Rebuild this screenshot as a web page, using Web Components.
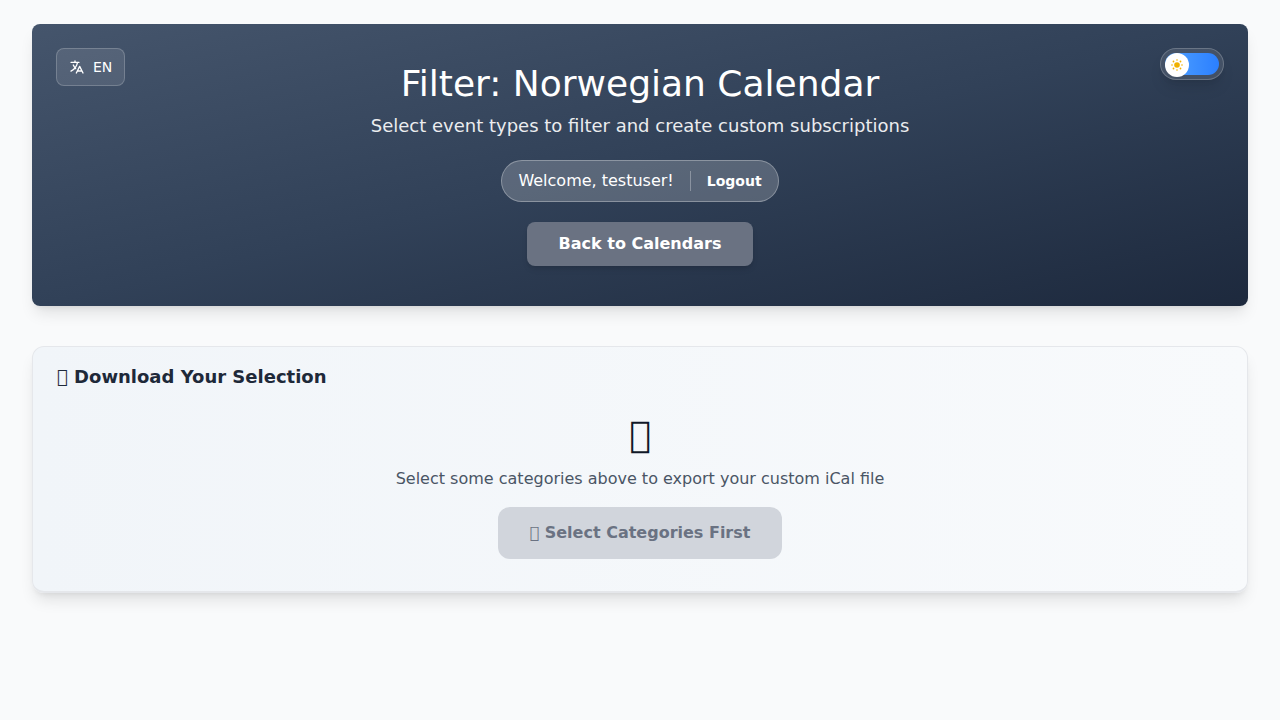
<!DOCTYPE html>
<html lang="en">
<head>
<meta charset="utf-8">
<meta name="viewport" content="width=device-width, initial-scale=1">
<title>Filter: Norwegian Calendar</title>
<style>
  body { margin: 0; background: #f9fafb; color: #101828; font: 16px/24px "DejaVu Sans", sans-serif; }
</style>
</head>
<body>
<calendar-app></calendar-app>
<script>
const define = (name, html) => {
  const template = document.createElement('template');
  template.innerHTML = '<style>*,*::before,*::after{box-sizing:border-box}:host{display:block;box-sizing:border-box}button{font:inherit;color:inherit;border:0;margin:0;padding:0;background:none;cursor:pointer}h1,h2,p{margin:0}</style>' + html;
  customElements.define(name, class extends HTMLElement {
    constructor() {
      super();
      this.attachShadow({ mode: 'open' }).append(template.content.cloneNode(true));
    }
  });
};

define('language-button', `
  <style>
    button { display: flex; align-items: center; gap: 8px; height: 38px; padding: 0 12px; border: 1px solid #ffffff33; border-radius: 8px; background: #ffffff1a; color: #fff; font-size: 14px; line-height: 20px; }
    svg { width: 16px; height: 16px; fill: none; stroke: currentColor; stroke-width: 2; stroke-linecap: round; stroke-linejoin: round; }
  </style>
  <button type="button" aria-label="Language">
    <svg viewBox="0 0 24 24" aria-hidden="true"><path d="M3 5h12M9 3v2m1.048 9.500A18.022 18.022 0 0 1 6.412 9m6.088 9h7M11 21l5-10 5 10M12.751 5C11.783 10.770 8.070 15.610 3 18.129"/></svg>
    <slot></slot>
  </button>`);

define('theme-toggle', `
  <style>
    button { display: block; width: 64px; height: 32px; padding: 4px; border: 1px solid #ffffff33; border-radius: 16px; background: #ffffff1a; box-shadow: 0 10px 15px -3px #0000001a, 0 4px 6px -4px #0000001a; }
    .track { display: block; height: 22px; border-radius: 11px; background: linear-gradient(to right, #51a2ff, #2b7fff); }
    .knob { display: grid; place-items: center; width: 24px; height: 24px; border-radius: 50%; background: #fff; }
    svg { width: 12px; height: 12px; fill: #f0b100; }
  </style>
  <button type="button" role="switch" aria-checked="false" aria-label="Dark mode">
    <span class="track"><span class="knob">
      <svg viewBox="0 0 12 12" aria-hidden="true"><circle cx="6" cy="6" r="2.800"/><circle cx="6" cy="1" r=".8"/><circle cx="6" cy="11" r=".8"/><circle cx="1" cy="6" r=".8"/><circle cx="11" cy="6" r=".8"/><circle cx="2.500" cy="2.500" r=".9"/><circle cx="9.500" cy="2.500" r=".9"/><circle cx="2.500" cy="9.500" r=".9"/><circle cx="9.500" cy="9.500" r=".9"/></svg>
    </span></span>
  </button>`);

define('user-pill', `
  <style>
    :host { display: flex; align-items: center; gap: 16px; height: 42px; padding: 0 16px; border: 1px solid #ffffff4d; border-radius: 21px; background: #ffffff33; color: #fff; }
    .rule { width: 1px; height: 20px; background: #ffffff4d; }
    button { font-size: 14px; line-height: 20px; font-weight: 700; }
  </style>
  <slot></slot><span class="rule"></span><button type="button">Logout</button>`);

define('app-header', `
  <style>
    :host { position: relative; border-radius: 8px; color: #fff; text-align: center; background: linear-gradient(to bottom right in oklab, #45556c, #314158, #1d293d); box-shadow: 0 10px 15px -3px #0000001a, 0 4px 6px -4px #0000001a; }
    header { display: flex; flex-direction: column; align-items: center; padding: 40px 24px; }
    language-button { position: absolute; top: 24px; left: 24px; }
    theme-toggle { position: absolute; top: 24px; right: 24px; }
    h1 { font-size: 36px; line-height: 40px; font-weight: 400; margin-bottom: 8px; }
    p { font-size: 18px; line-height: 28px; margin-bottom: 20px; opacity: .9; }
    user-pill { margin-bottom: 20px; }
    .back { height: 44px; padding: 0 32px; border-radius: 8px; background: #6a7282; font-weight: 700; box-shadow: 0 4px 6px -1px #0000001a, 0 2px 4px -2px #0000001a; }
  </style>
  <header>
    <language-button>EN</language-button>
    <theme-toggle></theme-toggle>
    <h1><slot name="title"></slot></h1>
    <p><slot name="subtitle"></slot></p>
    <user-pill>Welcome, testuser!</user-pill>
    <button class="back" type="button">Back to Calendars</button>
  </header>`);

define('download-card', `
  <style>
    :host { padding: 16px 24px 32px; border: 1px solid #e5e7eb; border-bottom-width: 2px; border-radius: 12px; background: linear-gradient(to right in oklab, #f1f5f9, #f8fafc); box-shadow: 0 10px 15px -3px #0000001a, 0 4px 6px -4px #0000001a; }
    h2 { font-size: 18px; line-height: 28px; color: #1e2939; margin-bottom: 24px; }
    .empty { display: flex; flex-direction: column; align-items: center; text-align: center; }
    .icon { font-size: 36px; line-height: 40px; margin-bottom: 12px; }
    p { color: #4a5565; margin-bottom: 16px; }
    button { height: 52px; padding: 0 32px; border-radius: 12px; background: #d1d5dc; color: #6a7282; font-weight: 700; cursor: not-allowed; }
  </style>
  <section aria-labelledby="heading">
    <h2 id="heading">&#x10FF00; Download Your Selection</h2>
    <div class="empty">
      <div class="icon" aria-hidden="true">&#x10FF01;</div>
      <p>Select some categories above to export your custom iCal file</p>
      <button type="button" disabled>&#x10FF00; Select Categories First</button>
    </div>
  </section>`);

define('calendar-app', `
  <style>
    main { display: flex; flex-direction: column; gap: 40px; padding: 24px 32px; }
  </style>
  <main>
    <app-header><span slot="title">Filter: Norwegian Calendar</span><span slot="subtitle">Select event types to filter and create custom subscriptions</span></app-header>
    <download-card></download-card>
  </main>`);
</script>
</body>
</html>
